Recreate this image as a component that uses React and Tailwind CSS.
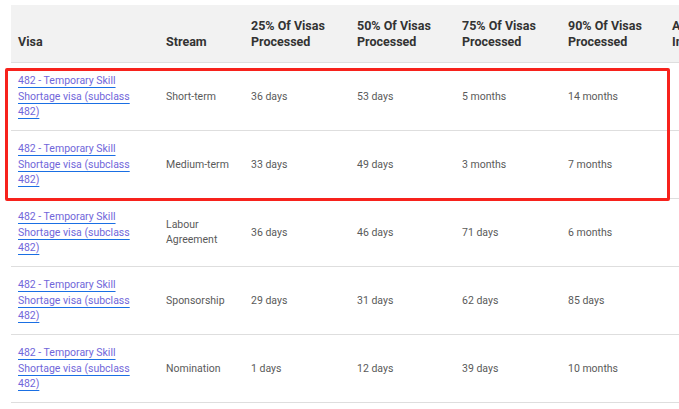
import React from "react";

const rows = [
    { stream: "Short-term", p25: "36 days", p50: "53 days", p75: "5 months", p90: "14 months" },
    { stream: "Medium-term", p25: "33 days", p50: "49 days", p75: "3 months", p90: "7 months" },
    { stream: "Labour Agreement", p25: "36 days", p50: "46 days", p75: "71 days", p90: "6 months" },
    { stream: "Sponsorship", p25: "29 days", p50: "31 days", p75: "62 days", p90: "85 days" },
    { stream: "Nomination", p25: "1 days", p50: "12 days", p75: "39 days", p90: "10 months" },
];

const App = () =>
{
    return (
        <div
            className="relative w-[679px] h-[409px] overflow-hidden bg-white"
            style={{ fontFamily: "Roboto, 'Liberation Sans', sans-serif" }}
        >
            <table className="table-fixed border-collapse w-[774px] ml-[11px] mt-[5px] text-left">
                <thead>
                    <tr className="bg-[#f2f2f2] border-b border-[#dedede]">
                        <th className="w-[148px] px-[7px] pt-[13px] pb-[12px] align-bottom text-[12.5px] leading-[16px] font-bold text-[#333]">Visa</th>
                        <th className="w-[85px] px-[7px] pt-[13px] pb-[12px] align-bottom text-[12.5px] leading-[16px] font-bold text-[#333]">Stream</th>
                        <th className="w-[106px] px-[7px] pt-[13px] pb-[12px] align-bottom text-[12.5px] leading-[16px] font-bold text-[#333]">25% Of Visas Processed</th>
                        <th className="w-[105px] px-[7px] pt-[13px] pb-[12px] align-bottom text-[12.5px] leading-[16px] font-bold text-[#333]">50% Of Visas Processed</th>
                        <th className="w-[106px] px-[7px] pt-[13px] pb-[12px] align-bottom text-[12.5px] leading-[16px] font-bold text-[#333]">75% Of Visas Processed</th>
                        <th className="w-[104px] px-[7px] pt-[13px] pb-[12px] align-bottom text-[12.5px] leading-[16px] font-bold text-[#333]">90% Of Visas Processed</th>
                        <th className="w-[120px] px-[7px] pt-[13px] pb-[12px] align-bottom text-[12.5px] leading-[16px] font-bold text-[#333]">Applications<br />In Hand</th>
                    </tr>
                </thead>
                <tbody className="text-[10.5px] leading-[15.5px] text-[#5a5a5a]">
                    {rows.map((row, index) => (
                        <tr key={index} className="border-b border-[#dedede]">
                            <td className="px-[7px] pt-[10px] pb-[10.5px] align-middle">
                                <a
                                    href="#"
                                    className="text-[#7166da] underline decoration-[#1a6fe3] underline-offset-[3px]"
                                >
                                    482 - Temporary Skill Shortage visa (subclass 482)
                                </a>
                            </td>
                            <td className="px-[7px] pt-[10px] pb-[10.5px] align-middle">{row.stream}</td>
                            <td className="px-[7px] pt-[10px] pb-[10.5px] align-middle">{row.p25}</td>
                            <td className="px-[7px] pt-[10px] pb-[10.5px] align-middle">{row.p50}</td>
                            <td className="px-[7px] pt-[10px] pb-[10.5px] align-middle">{row.p75}</td>
                            <td className="px-[7px] pt-[10px] pb-[10.5px] align-middle">{row.p90}</td>
                            <td className="px-[7px] pt-[10px] pb-[10.5px] align-middle"></td>
                        </tr>
                    ))}
                </tbody>
            </table>

            {/* highlight box over the first two rows */}
            <div className="absolute left-[5px] top-[68px] w-[665px] h-[133px] border-[3px] border-[#f7221c] rounded-[2px] pointer-events-none" />
        </div>
    );
};

export default App;
